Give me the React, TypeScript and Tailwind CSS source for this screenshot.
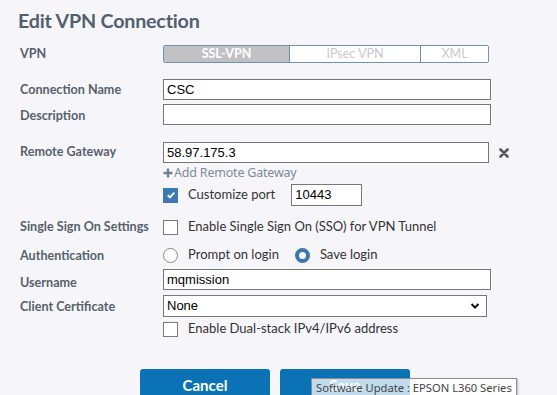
import React from "react";

const label = "w-[143px] shrink-0 text-[12.6px] font-bold text-[#56616c] [font-family:Lato,sans-serif]";
const input =
  "h-[21px] border border-[#777] bg-white px-[3px] text-[13px] text-black [font-family:'Liberation_Sans',Arial,sans-serif] flex items-center";

function Check({ checked }: { checked?: boolean }) {
  return checked ? (
    <span className="w-[15px] h-[15px] bg-[#3b78b4] flex items-center justify-center">
      <svg width="10" height="10" viewBox="0 0 10 10">
        <path d="M1.8 5.2 L4 7.3 L8.3 2.6" stroke="#fff" strokeWidth="1.9" fill="none" />
      </svg>
    </span>
  ) : (
    <span className="w-[15px] h-[15px] border border-[#7a7a7a] bg-white" />
  );
}

export default function App() {
  return (
    <div className="relative w-[557px] h-[395px] overflow-hidden bg-[#f6f6fa] [font-family:Lato,sans-serif]">
      <div className="pl-[18px] pt-[6px] h-[38px] text-[19.7px] font-bold text-[#52606d] tracking-[-0.2px]">
        Edit VPN Connection
      </div>

      {/* VPN */}
      <div className="flex items-center pl-[20px] h-[18px] mt-[7px]">
        <div className={label}>VPN</div>
        <div className="flex h-[18px] w-[326px] border border-[#6f92b3] rounded-[2px] overflow-hidden text-[12.5px]">
          <div className="w-[125px] bg-[#c1c1c4] text-white font-bold flex items-center justify-center">SSL-VPN</div>
          <div className="w-[131px] border-l border-[#6f92b3] bg-white text-[#c9c9cc] flex items-center justify-center">IPsec VPN</div>
          <div className="flex-1 border-l border-[#6f92b3] bg-white text-[#c9c9cc] flex items-center justify-center">XML</div>
        </div>
      </div>

      {/* Connection Name */}
      <div className="flex items-center pl-[20px] h-[21px] mt-[16px]">
        <div className={label + " mt-[2px]"}>Connection Name</div>
        <div className={input + " w-[328px]"}>CSC</div>
      </div>
      <div className="flex items-center pl-[20px] h-[21px] mt-[4px]">
        <div className={label + " mt-[3px]"}>Description</div>
        <div className={input + " w-[328px]"}></div>
      </div>

      {/* Remote Gateway */}
      <div className="flex items-center pl-[20px] h-[21px] mt-[17px]">
        <div className={label}>Remote Gateway</div>
        <div className={input + " w-[326px]"}>58.97.175.3</div>
        <svg className="ml-[10px]" width="10" height="10" viewBox="0 0 10 10">
          <path d="M1.5 1.5 L8.5 8.5 M8.5 1.5 L1.5 8.5" stroke="#5a5a5a" strokeWidth="2.6" strokeLinecap="round" />
        </svg>
      </div>
      <div className="flex items-center pl-[163px] h-[16px] mt-[2px] text-[12.5px] text-[#7d8b98] [font-family:'Noto_Sans',sans-serif]">
        <svg width="10" height="10" viewBox="0 0 10 10" className="mr-[1px]">
          <path d="M5 0.5 V9.5 M0.5 5 H9.5" stroke="#6f7f8e" strokeWidth="2.4" />
        </svg>
        <span className="tracking-[-0.2px]">Add Remote Gateway</span>
      </div>
      <div className="flex items-center pl-[163px] h-[22px] mt-[3px] text-[13px] text-[#333]">
        <Check checked />
        <span className="ml-[10px]">Customize port</span>
        <div className={input + " w-[71px] h-[22px] ml-[16px]"}>10443</div>
      </div>

      {/* SSO */}
      <div className="flex items-center pl-[20px] h-[20px] mt-[11px]">
        <div className={label}>Single Sign On Settings</div>
        <Check />
        <span className="ml-[10px] text-[13px] text-[#333]">Enable Single Sign On (SSO) for VPN Tunnel</span>
      </div>

      {/* Authentication */}
      <div className="flex items-center pl-[20px] h-[20px] mt-[8px]">
        <div className={label + " mt-[2px]"}>Authentication</div>
        <span className="w-[15px] h-[15px] rounded-full border border-[#888] bg-white" />
        <span className="ml-[10px] text-[13px] text-[#333]">Prompt on login</span>
        <span className="ml-[16px] w-[15px] h-[15px] rounded-full border-[4px] border-[#3a78b3] bg-white" />
        <span className="ml-[10px] text-[13px] text-[#333]">Save login</span>
      </div>

      {/* Username */}
      <div className="flex items-center pl-[20px] h-[21px] mt-[4px]">
        <div className={label + " mt-[7px]"}>Username</div>
        <div className={input + " w-[328px]"}>mqmission</div>
      </div>

      {/* Client cert */}
      <div className="flex items-center pl-[20px] h-[22px] mt-[5px]">
        <div className={label + " mt-[3px]"}>Client Certificate</div>
        <div className={input + " w-[324px] h-[22px] justify-between pr-[6px]"}>
          <span>None</span>
          <svg width="10" height="8" viewBox="0 0 10 8">
            <path d="M1.5 2 L5 5.5 L8.5 2" stroke="#111" strokeWidth="2" fill="none" />
          </svg>
        </div>
      </div>

      <div className="flex items-center pl-[163px] h-[16px] mt-[4px]">
        <Check />
        <span className="ml-[10px] text-[13px] text-[#333]">Enable Dual-stack IPv4/IPv6 address</span>
      </div>

      {/* Buttons */}
      <div className="flex pl-[140px] gap-[10px] mt-[32px]">
        <div className="w-[130px] h-[36px] rounded-[3px] bg-[#0b72b6] text-white text-[15px] font-bold flex items-start justify-center pt-[5px]">Cancel</div>
        <div className="w-[130px] h-[36px] rounded-[3px] bg-[#0b72b6] text-white text-[15px] font-bold flex items-start justify-center pt-[5px]">Save</div>
      </div>

      {/* Tooltip */}
      <div className="absolute left-[311px] top-[378px] h-[20px] px-[4px] border border-[#8e8e8e] bg-[rgba(255,255,255,0.75)] text-[11.2px] text-[#444] flex items-center [font-family:'Noto_Sans',sans-serif] shadow-[1px_1px_2px_rgba(0,0,0,0.25)]">
        Software Update : EPSON L360 Series
      </div>
    </div>
  );
}
